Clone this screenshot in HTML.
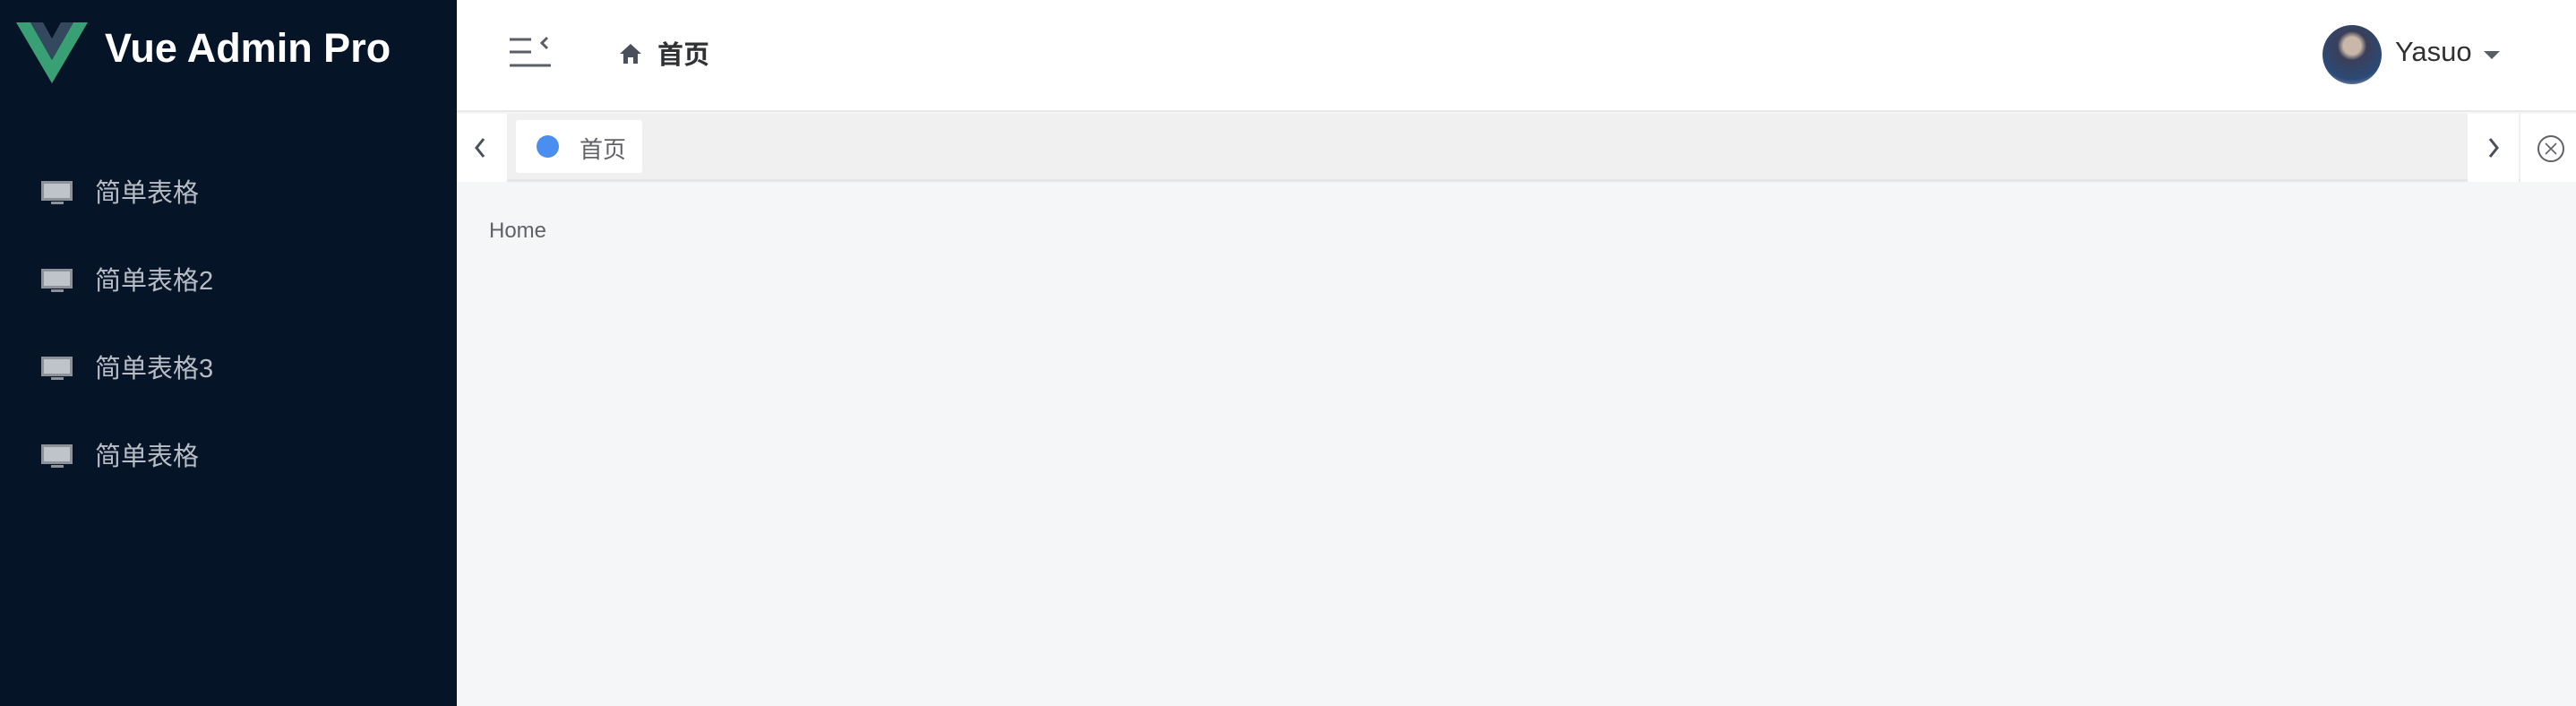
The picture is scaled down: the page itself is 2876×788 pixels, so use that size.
<!DOCTYPE html>
<html><head><meta charset="utf-8"><style>
*{margin:0;padding:0;box-sizing:border-box}
body{width:2876px;height:788px;overflow:hidden;background:#f5f6f8;font-family:"Liberation Sans","Noto Sans CJK SC",sans-serif;position:relative}
.side{position:absolute;left:0;top:0;width:510px;height:788px;background:#051426}
.title{position:absolute;left:117px;top:28px;font-size:45px;color:#fff;font-weight:bold}
.mi{position:absolute;left:46px;color:#b7bcc5;font-size:29px;display:flex;align-items:center}
.mi span.i{width:35px;height:22px;background:#bfc3ca;border:3px solid #8d929a;margin-right:25px;position:relative}
.mi span.i:after{content:"";position:absolute;left:8px;bottom:-7px;width:14px;height:3px;background:#8d929a}
.hdr{position:absolute;left:510px;top:0;right:0;height:125px;background:#fff;border-bottom:2px solid #e8e8e8}
.tabs{position:absolute;left:510px;top:127px;right:0;height:76px;background:#f0f0f0;border-bottom:3px solid #e6e6e6}
.abs{position:absolute}
</style></head><body>
<div class="side">
<svg class="abs" style="left:18px;top:25px" width="80" height="68" viewBox="0 0 80 68"><polygon points="0,0 16,0 40,42 64,0 80,0 40,68" fill="#42b883" opacity=".85"/><polygon points="16,0 30,0 40,18 50,0 64,0 40,42" fill="#35495e"/></svg>
<div class="title">Vue Admin Pro</div>
<div class="mi" style="top:192px"><span class="i"></span>简单表格</div>
<div class="mi" style="top:290px"><span class="i"></span>简单表格2</div>
<div class="mi" style="top:388px"><span class="i"></span>简单表格3</div>
<div class="mi" style="top:486px"><span class="i"></span>简单表格</div>
</div>
<div class="hdr">
<svg class="abs" style="left:57px;top:40px" width="50" height="36" viewBox="0 0 50 36"><g stroke="#5a5e66" stroke-width="3" fill="none"><line x1="2" y1="4" x2="26" y2="4"/><line x1="2" y1="18" x2="26" y2="18"/><line x1="2" y1="33" x2="48" y2="33"/><polyline points="44,2 38,8 44,14"/></g></svg>
<svg class="abs" style="left:181px;top:48px" width="26" height="24" viewBox="0 0 26 24"><path d="M13 1 L25 12 L21 12 L21 23 L16 23 L16 16 L10 16 L10 23 L5 23 L5 12 L1 12Z" fill="#4a4f5a"/></svg>
<div class="abs" style="left:224px;top:38px;font-size:29px;font-weight:bold;color:#303133">首页</div>
<div class="abs" style="left:2083px;top:28px;width:66px;height:66px;border-radius:50%;background:radial-gradient(circle at 50% 35%,#c9b8a8 0 18%,#3a3f58 30%,#2b4a78 70%,#ccc 100%)"></div>
<div class="abs" style="left:2164px;top:40px;font-size:31px;color:#303133">Yasuo</div>
<div class="abs" style="left:2263px;top:57px;border-left:9px solid transparent;border-right:9px solid transparent;border-top:9px solid #5a5e66"></div>
</div>
<div class="tabs">
<div class="abs" style="left:0;top:0;width:56px;height:76px;background:#fff"></div>
<svg class="abs" style="left:18px;top:26px" width="16" height="24"><polyline points="12,2 4,12 12,22" stroke="#4a4f5a" stroke-width="3" fill="none"/></svg>
<div class="abs" style="left:66px;top:7px;width:141px;height:59px;background:#fff;border-radius:3px"></div>
<div class="abs" style="left:89px;top:24px;width:25px;height:25px;border-radius:50%;background:#4a8ff0"></div>
<div class="abs" style="left:137px;top:20px;font-size:26px;color:#606266">首页</div>
<div class="abs" style="left:2245px;top:0;width:57px;height:76px;background:#fff"></div>
<svg class="abs" style="left:2266px;top:26px" width="16" height="24"><polyline points="4,2 12,12 4,22" stroke="#4a4f5a" stroke-width="3" fill="none"/></svg>
<div class="abs" style="left:2304px;top:0;width:62px;height:76px;background:#fff"></div>
<svg class="abs" style="left:2322px;top:23px" width="32" height="32"><circle cx="16" cy="16" r="14" stroke="#606266" stroke-width="2" fill="none"/><path d="M10 10L22 22M22 10L10 22" stroke="#606266" stroke-width="1.6"/></svg>
</div>
<div class="abs" style="left:546px;top:244px;font-size:24px;color:#606266">Home</div>
</body></html>
